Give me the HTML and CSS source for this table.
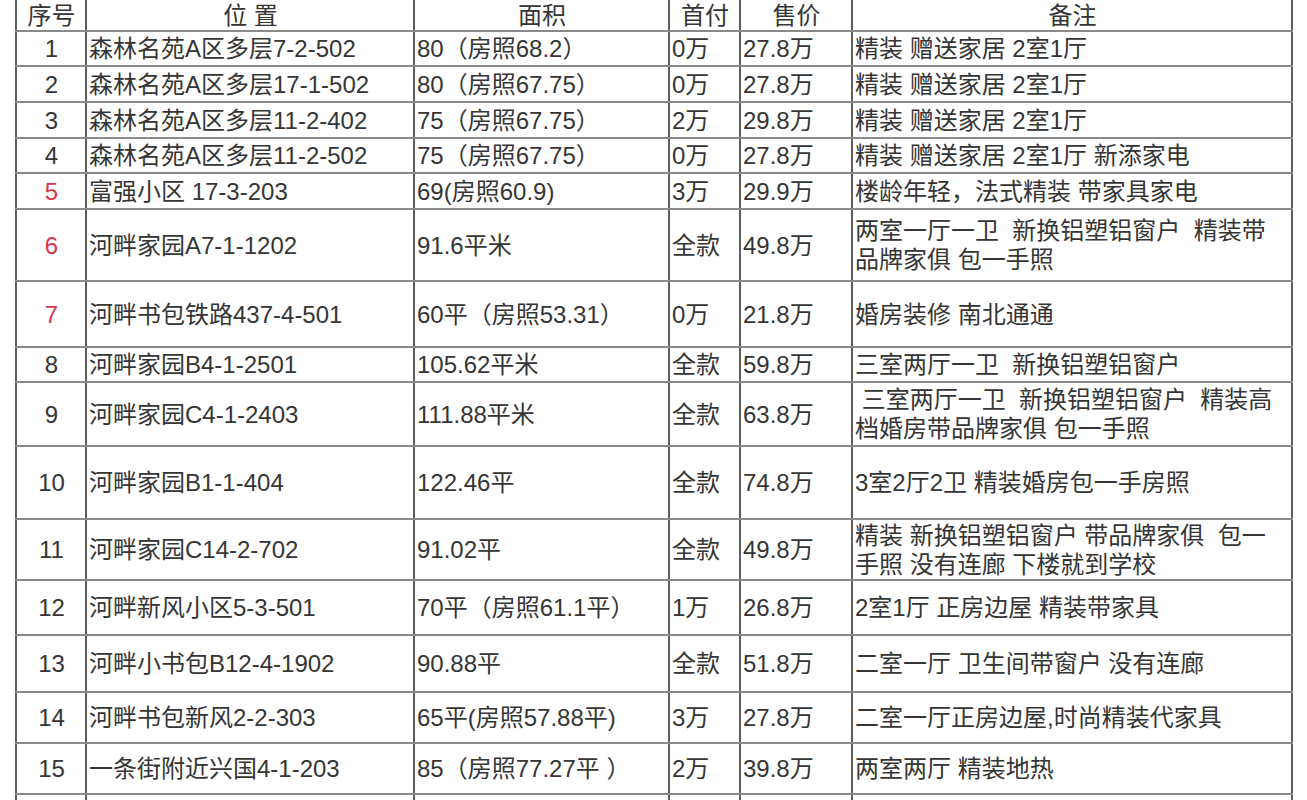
FILE: index.html
```html
<!DOCTYPE html>
<html lang="zh-CN">
<head>
<meta charset="utf-8">
<title>房源表</title>
<link rel="stylesheet" href="styles.css">
</head>
<body>
<table class="sheet">
  <colgroup>
    <col class="c-no"><col class="c-loc"><col class="c-area"><col class="c-down"><col class="c-price"><col class="c-note">
  </colgroup>
  <thead>
    <tr class="h31">
      <th>序号</th><th>位 置</th><th>面积</th><th>首付</th><th>售价</th><th>备注</th>
    </tr>
  </thead>
  <tbody>
    <tr class="h35"><td class="no">1</td><td>森林名苑A区多层7-2-502</td><td>80（房照68.2）</td><td>0万</td><td>27.8万</td><td>精装 赠送家居 2室1厅</td></tr>
    <tr class="h36"><td class="no">2</td><td>森林名苑A区多层17-1-502</td><td>80（房照67.75）</td><td>0万</td><td>27.8万</td><td>精装 赠送家居 2室1厅</td></tr>
    <tr class="h36"><td class="no">3</td><td>森林名苑A区多层11-2-402</td><td>75（房照67.75）</td><td>2万</td><td>29.8万</td><td>精装 赠送家居 2室1厅</td></tr>
    <tr class="h35"><td class="no">4</td><td>森林名苑A区多层11-2-502</td><td>75（房照67.75）</td><td>0万</td><td>27.8万</td><td>精装 赠送家居 2室1厅 新添家电</td></tr>
    <tr class="h36"><td class="no red">5</td><td>富强小区 17-3-203</td><td>69(房照60.9)</td><td>3万</td><td>29.9万</td><td>楼龄年轻，法式精装 带家具家电</td></tr>
    <tr class="h72"><td class="no red">6</td><td>河畔家园A7-1-1202</td><td>91.6平米</td><td>全款</td><td>49.8万</td><td class="pre">两室一厅一卫  新换铝塑铝窗户  精装带<br>品牌家俱 包一手照</td></tr>
    <tr class="h66"><td class="no red">7</td><td>河畔书包铁路437-4-501</td><td>60平（房照53.31）</td><td>0万</td><td>21.8万</td><td>婚房装修 南北通通</td></tr>
    <tr class="h35"><td class="no">8</td><td>河畔家园B4-1-2501</td><td>105.62平米</td><td>全款</td><td>59.8万</td><td class="pre">三室两厅一卫  新换铝塑铝窗户</td></tr>
    <tr class="h64"><td class="no">9</td><td>河畔家园C4-1-2403</td><td>111.88平米</td><td>全款</td><td>63.8万</td><td class="pre"> 三室两厅一卫  新换铝塑铝窗户  精装高<br>档婚房带品牌家俱 包一手照</td></tr>
    <tr class="h73"><td class="no">10</td><td>河畔家园B1-1-404</td><td>122.46平</td><td>全款</td><td>74.8万</td><td>3室2厅2卫 精装婚房包一手房照</td></tr>
    <tr class="h61"><td class="no">11</td><td>河畔家园C14-2-702</td><td>91.02平</td><td>全款</td><td>49.8万</td><td class="pre">精装 新换铝塑铝窗户 带品牌家俱  包一<br>手照 没有连廊 下楼就到学校</td></tr>
    <tr class="h55"><td class="no">12</td><td>河畔新风小区5-3-501</td><td>70平（房照61.1平）</td><td>1万</td><td>26.8万</td><td>2室1厅 正房边屋 精装带家具</td></tr>
    <tr class="h57"><td class="no">13</td><td>河畔小书包B12-4-1902</td><td>90.88平</td><td>全款</td><td>51.8万</td><td>二室一厅 卫生间带窗户 没有连廊</td></tr>
    <tr class="h51"><td class="no">14</td><td>河畔书包新风2-2-303</td><td>65平(房照57.88平)</td><td>3万</td><td>27.8万</td><td>二室一厅正房边屋,时尚精装代家具</td></tr>
    <tr class="h51"><td class="no">15</td><td>一条街附近兴国4-1-203</td><td>85（房照77.27平 ）</td><td>2万</td><td>39.8万</td><td>两室两厅 精装地热</td></tr>
    <tr class="h51"><td class="no"></td><td></td><td></td><td></td><td></td><td></td></tr>
  </tbody>
</table>
</body>
</html>
```

FILE: styles.css
```css
html, body {
  margin: 0;
  padding: 0;
  background: #ffffff;
}

body {
  font-family: "Liberation Sans", "Noto Sans CJK SC", sans-serif;
  color: #353535;
  overflow: hidden;
}

.sheet {
  margin-left: 15px;
  border-collapse: collapse;
  table-layout: fixed;
  width: 1276px;
  font-size: 24px;
  line-height: 29px;
}

.c-no { width: 70px; }
.c-loc { width: 328px; }
.c-area { width: 255px; }
.c-down { width: 71px; }
.c-price { width: 112px; }
.c-note { width: 440px; }

.sheet th,
.sheet td {
  border-left: 2px solid #5e5e5e;
  border-right: 2px solid #5e5e5e;
  border-top: 2px solid #8a8a8a;
  border-bottom: 2px solid #8a8a8a;
  padding: 0 1px 0 2px;
  vertical-align: middle;
  white-space: nowrap;
  overflow: hidden;
  text-align: left;
}

.sheet thead th {
  border-top: none;
  font-weight: normal;
  text-align: center;
  white-space: pre;
}

.sheet td.no {
  text-align: center;
}

.sheet td.red {
  color: #d8364a;
}

.sheet td.pre {
  white-space: pre;
}

.h31 { height: 31px; }
.h35 { height: 35px; }
.h36 { height: 36px; }
.h51 { height: 51px; }
.h55 { height: 55px; }
.h57 { height: 57px; }
.h61 { height: 61px; }
.h64 { height: 64px; }
.h66 { height: 66px; }
.h72 { height: 72px; }
.h73 { height: 73px; }
```
